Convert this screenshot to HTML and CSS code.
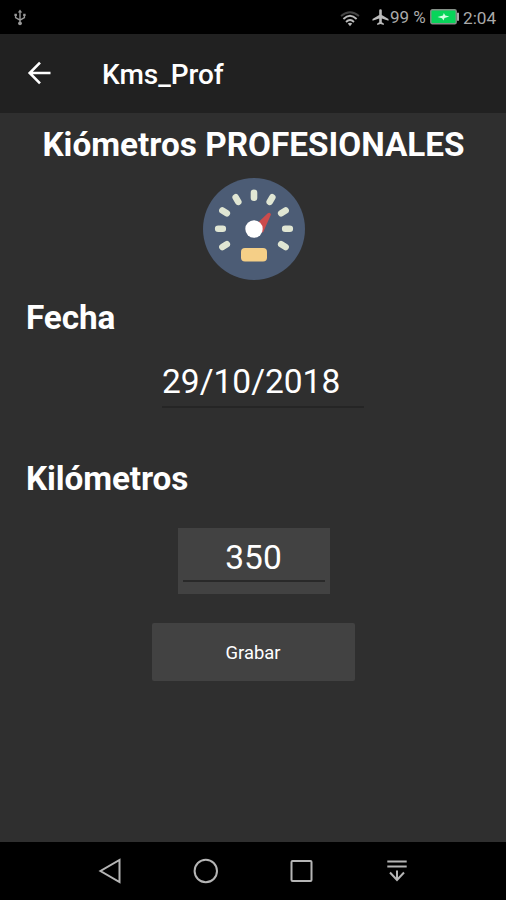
FILE: index.html
```html
<!DOCTYPE html>
<html lang="es">
<head>
<meta charset="utf-8">
<title>Kms_Prof</title>
<link rel="stylesheet" href="styles.css">
</head>
<body>
<div class="screen">
  <div class="status">
    <svg class="usb" width="12" height="17" viewBox="0 0 12 17" fill="none" stroke="#999" stroke-width="1.4">
      <path d="M6 2v12M1.600 6v2.600L6 11.200l4.400-2.600V6"/>
      <path d="M3.800 3.500 6 .5l2.200 3zM.4 4.700h2.500v2.400H.4zM9.200 4.700h2.400v2.400H9.200z" fill="#999" stroke="none"/>
      <circle cx="6" cy="14.300" r="1.900" fill="#999" stroke="none"/>
    </svg>
    <svg class="wifi" width="20" height="16" viewBox="0 0 20 16" fill="none" stroke-width="1.800">
      <path d="M1 5Q10-2.500 19 5" stroke="#444"/>
      <path d="M3.400 8Q10 1.600 16.600 8M6 11Q10 7 14 11" stroke="#bbb"/>
      <path d="M7.800 12.500Q10 10.900 12.200 12.500L10 15.200z" fill="#bbb"/>
    </svg>
    <svg class="plane" width="17" height="16" viewBox="0 0 17 16" fill="#bbb">
      <path d="M7.200 1.600a1.300 1.300 0 0 1 2.600 0V6l6.700 4v1.700L9.800 9.600v3.600l2 1.400V16l-3.300-.9-3.300.9v-1.400l2-1.400V9.600L.5 11.700V10l6.700-4z"/>
    </svg>
    <span class="percent">99 %</span>
    <svg class="battery" width="30" height="16" viewBox="0 0 30 16">
      <rect x=".8" y=".8" width="25.400" height="14" rx="1.500" fill="#08d45a" stroke="#859088" stroke-width="1.400"/>
      <path d="M27 3.800h2v8h-2z" fill="#aaa"/>
      <path d="m7.500 8 5.500-1.400.8-2.600 1.500 2.400 4 1.100-4.800 1.500-1 2.500-1.500-2.300z" fill="#d4ffe3"/>
    </svg>
    <span class="clock">2:04</span>
  </div>
  <header class="appbar">
    <svg width="24" height="24" viewBox="0 0 24 24" fill="none" stroke="#fff" stroke-width="2.600"><path d="M23.500 12H2.500M13 1.700 2.700 12 13 22.300"/></svg>
    <h1>Kms_Prof</h1>
  </header>
  <main class="content">
    <h2 class="title">Kiómetros PROFESIONALES</h2>
    <svg class="gauge" width="102" height="102" viewBox="-51 -51 102 102">
      <circle r="51" fill="#4c5c75"/>
      <g stroke="#e0e6d3" stroke-width="6.600" stroke-linecap="round">
        <path d="M0-36.200v5M-18.300-31.700l2.600 4.500M18.300-31.700l-2.600 4.500M-31.600-18.500l4.400 2.700M31.600-18.500l-4.400 2.700M-35.800-.2h4.600M35.800-.2h-4.600M-31.600 18l4.400-2.700M31.600 18l-4.400-2.700"/>
      </g>
      <path d="M1.500-4 13.500-15.500Q16-17.500 17-14.500L9 3.500 0 0z" fill="#cc4b4c"/>
      <circle r="8.700" fill="#fff"/>
      <rect x="-13" y="19" width="26" height="13.500" rx="4" fill="#f5cf87"/>
    </svg>
    <h2 class="label">Fecha</h2>
    <div class="date">29/10/2018</div>
    <h2 class="label label-km">Kilómetros</h2>
    <div class="km"><div class="km-value">350</div></div>
    <button class="save">Grabar</button>
  </main>
  <nav class="navbar">
    <svg width="24" height="26" viewBox="0 0 24 26"><path d="M21.500 2v22L2.500 13z"/></svg>
    <svg width="26" height="26" viewBox="0 0 26 26"><circle cx="12.800" cy="13" r="11.200"/></svg>
    <svg width="24" height="24" viewBox="0 0 24 24"><rect x="1.500" y="2" width="20" height="20" rx="1"/></svg>
    <svg width="22" height="24" viewBox="0 0 22 24"><path d="M.3 2.500h19.400M.3 7.500h19.400M10 11.500v10M3 13.500l7 7.500 7-7.500"/></svg>
  </nav>
</div>
</body>
</html>
```

FILE: styles.css
```css
* { box-sizing: border-box; }
body { margin: 0; background: #2f2f2f; font-family: Roboto, sans-serif; color: #fff; }
h1, h2 { margin: 0; white-space: nowrap; }
svg { display: block; flex: none; }
.screen { width: 506px; height: 900px; display: flex; flex-direction: column; }
.status { height: 34px; background: #000; display: flex; align-items: center; padding-left: 14px; color: #aaa; font-size: 17px; line-height: 34px; white-space: nowrap; }
.wifi { margin-left: 314px; margin-top: 3px; }
.plane { margin-left: 12px; }
.percent { width: 37px; margin-left: 1px; margin-right: 3px; }
.clock { margin-left: 3px; padding-top: 1px; font-size: 17.2px; }
.appbar { height: 79px; background: #212121; display: flex; align-items: center; padding-left: 27px; }
.appbar svg { margin-bottom: 1px; }
.appbar h1 { margin: 2px 0 0 51px; font-size: 28px; letter-spacing: -.05px; font-weight: 500; line-height: 40px; }
.content { flex: 1; background: #2f2f2f; display: flex; flex-direction: column; align-items: center; }
.title { margin: 12px 0 0 1px; font-size: 33.3px; line-height: 40px; font-weight: 700; }
.gauge { margin-top: 13px; margin-left: 1px; }
.label { align-self: flex-start; margin: 18px 0 0 26px; font-size: 33.3px; letter-spacing: -.1px; line-height: 40px; font-weight: 700; }
.date { width: 202px; height: 49px; margin-top: 21px; margin-left: 20px; border-bottom: 2px solid #252525; font-size: 33.5px; line-height: 46px; }
.label-km { margin-top: 51px; }
.km { width: 152px; height: 66px; margin-top: 29px; margin-left: 1px; padding: 0 5px; background: #424242; }
.km-value { height: 54px; border-bottom: 2px solid #292929; font-size: 33.5px; line-height: 59px; text-align: center; }
.save { width: 203px; height: 58px; margin-top: 29px; padding: 1px 0 0; border: 0; border-radius: 2px; background: #424242; color: #fff; font: 400 18.4px Roboto, sans-serif; }
.navbar { height: 58px; background: #000; display: flex; align-items: center; padding-left: 98px; }
.navbar svg { fill: none; stroke: #b5b5b5; stroke-width: 2; }
.navbar svg + svg { margin-left: 71px; }
.navbar svg:last-child { margin-left: 73px; }
```
